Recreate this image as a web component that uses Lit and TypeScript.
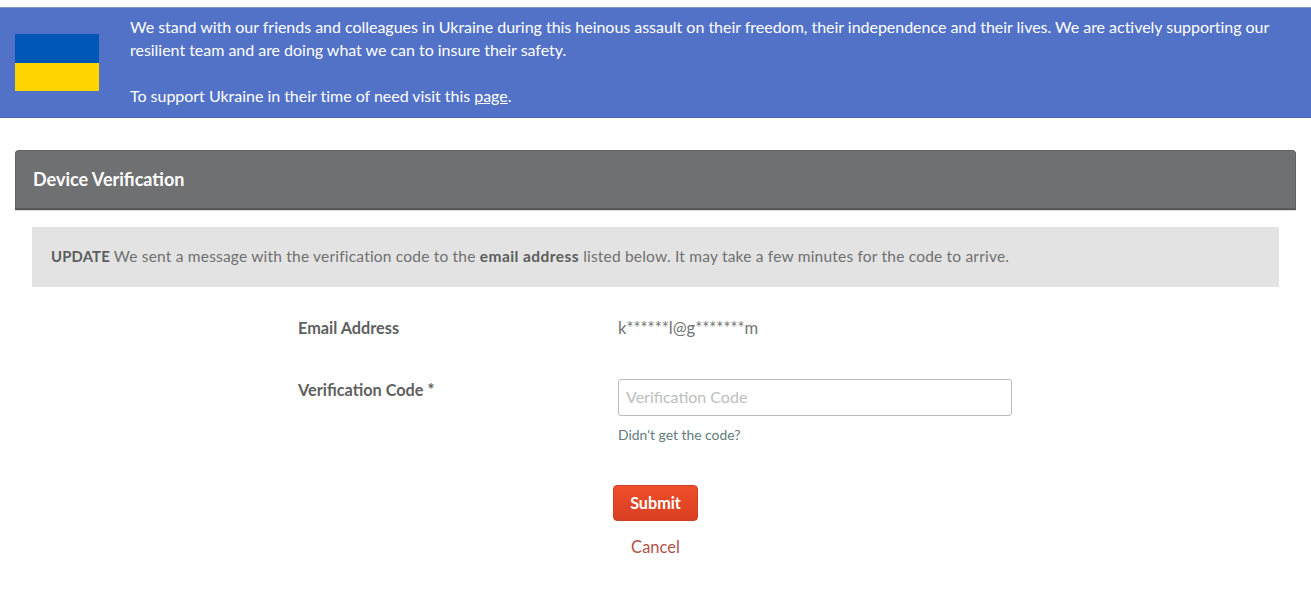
import { LitElement, html, css } from "lit";
import { customElement } from "lit/decorators.js";

@customElement("app-root")
export class AppRoot extends LitElement {
  static styles = css`
    :host { display: block; font-family: Lato, "Open Sans", sans-serif; color: #666766; background: #fff; padding-top: 7px; min-height: 593px; }
    .banner { display: flex; align-items: center; gap: 31px; height: 111px; box-sizing: border-box; padding: 0 15px; background: #5272c8; border-top: 1px solid #7d93d4; border-bottom: 1px solid #4a68bb; color: #fff; font-size: 16px; line-height: 23px; }
    .flag { flex: none; width: 84px; height: 57px; display: flex; flex-direction: column; }
    .flag .b { flex: 1; background: #0057b7; }
    .flag .y { flex: 1; background: #ffd500; }
    .banner p { margin: 0 0 4px; letter-spacing: -0.026px; }
    .banner a { color: #fff; text-decoration: underline; }
    .head { margin: 32px 15px 0; height: 60px; box-sizing: border-box; background: #6f7072; border: 1px solid #616264; border-bottom: 2px solid #57585a; border-radius: 4px 4px 0 0; box-shadow: 0 1px 0 #dcdcdc; display: flex; align-items: center; padding: 0 0 2px 17px; color: #fff; font-weight: 700; font-size: 18px; }
    .alert { margin: 17px 32px 0; height: 60px; box-sizing: border-box; display: flex; align-items: center; padding: 0 0 2px 19px; background: #e3e3e3; font-size: 15.5px; letter-spacing: 0.2px; color: #6f7070; }
    .alert b { color: #5c5d5d; white-space: pre; }
    .alert .upd { font-size: 14.8px; }
    .alert .em { letter-spacing: 0.43px; }
    .form { display: grid; grid-template-columns: 320px 394px; margin: 30px 0 0 298px; font-size: 16.3px; line-height: 23px; }
    .label { font-weight: 700; color: #5f6060; line-height: 21px; }
    .row1 { height: 62px; }
    .value { color: #737474; font-size: 16.6px; line-height: 23px; }
    input { display: block; width: 100%; height: 37px; box-sizing: border-box; border: 1px solid #b8bcbc; border-radius: 3px; padding: 0 7px 3px; font: 16px Lato, sans-serif; background: #fff; }
    input::placeholder { color: #bcbebe; opacity: 1; }
    .help { display: block; margin-top: 7px; font-size: 13.9px; color: #5f7c7c; text-decoration: none; }
    .actions { display: flex; flex-direction: column; align-items: center; width: 85px; margin: 39px 0 0 613px; }
    button { width: 85px; height: 36px; border: 1px solid #cf3f22; border-radius: 4px; background: linear-gradient(#ee4e2a, #d93f22); color: #fff; font: 700 16.2px Lato, sans-serif; padding: 0 0 2px; }
    .cancel { margin-top: 16px; font-size: 16.5px; color: #ad5446; text-decoration: none; }
  `;
  render() {
    return html`
      <div class="banner">
        <div class="flag"><div class="b"></div><div class="y"></div></div>
        <p>We stand with our friends and colleagues in Ukraine during this heinous assault on their freedom, their independence and their lives. We are actively supporting our resilient team and are doing what we can to insure their safety.<br /><br />To support Ukraine in their time of need visit this <a href="#">page</a>.</p>
      </div>
      <div class="head">Device Verification</div>
      <div class="alert"><span><b class="upd">UPDATE</b> We sent a message with the verification code to the <b class="em">email address</b> listed below. It may take a few minutes for the code to arrive.</span></div>
      <div class="form">
        <div class="label row1">Email Address</div>
        <div class="value row1">k******l@g*******m</div>
        <div class="label">Verification Code *</div>
        <div>
          <input placeholder="Verification Code" />
          <a class="help" href="#">Didn't get the code?</a>
        </div>
      </div>
      <div class="actions">
        <button>Submit</button>
        <a class="cancel" href="#">Cancel</a>
      </div>
    `;
  }
}
